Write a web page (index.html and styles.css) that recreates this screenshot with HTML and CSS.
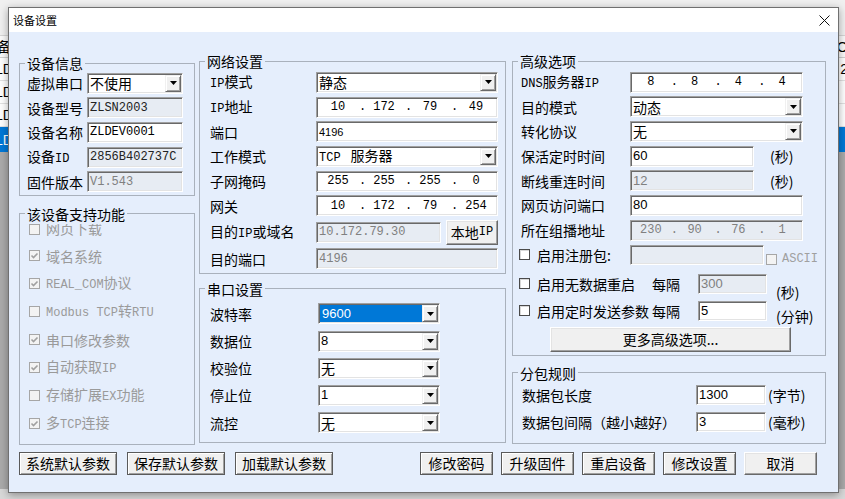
FILE: index.html
```html
<!DOCTYPE html>
<html lang="zh-CN">
<head>
<meta charset="utf-8">
<title>设备设置</title>
<link rel="stylesheet" href="styles.css">
</head>
<body>
<div class="app">
  <div class="app-top"></div>
  <div class="app-row head"><span class="cl">备</span><span class="cr">O</span></div>
  <div class="app-row"><span class="cl">LD</span><span class="cr">2</span></div>
  <div class="app-row"><span class="cl">LD</span><span class="cr"></span></div>
  <div class="app-row"><span class="cl">LD</span><span class="cr"></span></div>
  <div class="app-row cur"><span class="cl">LD</span><span class="cr"></span></div>
  <div class="app-rest"></div>
  <div class="app-bottom"></div>
</div>

<div class="dialog">
  <div class="titlebar">
    <span class="title">设备设置</span>
    <svg class="close" width="11" height="11" viewBox="0 0 11 11"><path d="M0.5 0.5 10.5 10.5 M10.5 0.5 0.5 10.5"/></svg>
  </div>
  <div class="dbody">
    <div class="panels">
      <div class="col col-left">
        <fieldset class="grp g-info">
          <legend>设备信息</legend>
          <div class="form f-info">
            <span class="lbl">虚拟串口</span>
            <div class="fld sel"><span class="v cjk">不使用</span><span class="dd"><svg width="7" height="4" viewBox="0 0 7 4"><path d="M0 0h7L3.5 4z"/></svg></span></div>
            <span class="lbl">设备型号</span>
            <div class="fld ro"><span class="v">ZLSN2003</span></div>
            <span class="lbl">设备名称</span>
            <div class="fld"><span class="v">ZLDEV0001</span></div>
            <span class="lbl">设备<span class="m">ID</span></span>
            <div class="fld ro"><span class="v">2856B402737C</span></div>
            <span class="lbl">固件版本</span>
            <div class="fld dis"><span class="v">V1.543</span></div>
          </div>
        </fieldset>
        <fieldset class="grp g-feat">
          <legend>该设备支持功能</legend>
          <div class="feat">
            <div class="chk first"><span class="cb dis"></span><span>网页下载</span></div>
            <div class="chk"><span class="cb dis"><svg viewBox="0 0 9 9"><path d="M1.5 4.5 3.5 6.5 7.5 2.5"/></svg></span><span>域名系统</span></div>
            <div class="chk"><span class="cb dis"><svg viewBox="0 0 9 9"><path d="M1.5 4.5 3.5 6.5 7.5 2.5"/></svg></span><span><span class="m">REAL_COM</span>协议</span></div>
            <div class="chk"><span class="cb dis"></span><span><span class="m">Modbus TCP</span>转<span class="m">RTU</span></span></div>
            <div class="chk"><span class="cb dis"><svg viewBox="0 0 9 9"><path d="M1.5 4.5 3.5 6.5 7.5 2.5"/></svg></span><span>串口修改参数</span></div>
            <div class="chk"><span class="cb dis"><svg viewBox="0 0 9 9"><path d="M1.5 4.5 3.5 6.5 7.5 2.5"/></svg></span><span>自动获取<span class="m">IP</span></span></div>
            <div class="chk"><span class="cb dis"></span><span>存储扩展<span class="m">EX</span>功能</span></div>
            <div class="chk"><span class="cb dis"><svg viewBox="0 0 9 9"><path d="M1.5 4.5 3.5 6.5 7.5 2.5"/></svg></span><span>多<span class="m">TCP</span>连接</span></div>
          </div>
        </fieldset>
      </div>

      <div class="col col-mid">
        <fieldset class="grp g-net">
          <legend>网络设置</legend>
          <div class="form f-net">
            <span class="lbl"><span class="m">IP</span>模式</span>
            <div class="fld sel"><span class="v cjk">静态</span><span class="dd"><svg width="7" height="4" viewBox="0 0 7 4"><path d="M0 0h7L3.5 4z"/></svg></span></div>
            <span class="lbl"><span class="m">IP</span>地址</span>
            <div class="fld ip"><span>10</span><span>.</span><span>172</span><span>.</span><span>79</span><span>.</span><span>49</span></div>
            <span class="lbl">端口</span>
            <div class="fld"><span class="v s small">4196</span></div>
            <span class="lbl">工作模式</span>
            <div class="fld sel"><span class="v cjk"><span class="m tcp">TCP</span>服务器</span><span class="dd"><svg width="7" height="4" viewBox="0 0 7 4"><path d="M0 0h7L3.5 4z"/></svg></span></div>
            <span class="lbl">子网掩码</span>
            <div class="fld ip"><span>255</span><span>.</span><span>255</span><span>.</span><span>255</span><span>.</span><span>0</span></div>
            <span class="lbl">网关</span>
            <div class="fld ip"><span>10</span><span>.</span><span>172</span><span>.</span><span>79</span><span>.</span><span>254</span></div>
            <span class="lbl">目的<span class="m">IP</span>或域名</span>
            <div class="pair">
              <div class="fld dis w-dest"><span class="v">10.172.79.30</span></div>
              <button class="btn b-local">本地<span class="m">IP</span></button>
            </div>
            <span class="lbl">目的端口</span>
            <div class="fld dis"><span class="v">4196</span></div>
          </div>
        </fieldset>
        <fieldset class="grp g-ser">
          <legend>串口设置</legend>
          <div class="form f-ser">
            <span class="lbl">波特率</span>
            <div class="fld sel hl"><span class="v s">9600</span><span class="dd"><svg width="7" height="4" viewBox="0 0 7 4"><path d="M0 0h7L3.5 4z"/></svg></span></div>
            <span class="lbl">数据位</span>
            <div class="fld sel"><span class="v s">8</span><span class="dd"><svg width="7" height="4" viewBox="0 0 7 4"><path d="M0 0h7L3.5 4z"/></svg></span></div>
            <span class="lbl">校验位</span>
            <div class="fld sel"><span class="v cjk">无</span><span class="dd"><svg width="7" height="4" viewBox="0 0 7 4"><path d="M0 0h7L3.5 4z"/></svg></span></div>
            <span class="lbl">停止位</span>
            <div class="fld sel"><span class="v s">1</span><span class="dd"><svg width="7" height="4" viewBox="0 0 7 4"><path d="M0 0h7L3.5 4z"/></svg></span></div>
            <span class="lbl">流控</span>
            <div class="fld sel"><span class="v cjk">无</span><span class="dd"><svg width="7" height="4" viewBox="0 0 7 4"><path d="M0 0h7L3.5 4z"/></svg></span></div>
          </div>
        </fieldset>
      </div>

      <div class="col col-right">
        <fieldset class="grp g-adv">
          <legend>高级选项</legend>
          <div class="form f-adv">
            <span class="lbl"><span class="m">DNS</span>服务器<span class="m">IP</span></span>
            <div class="fld ip"><span>8</span><span>.</span><span>8</span><span>.</span><span>4</span><span>.</span><span>4</span></div>
            <span class="lbl">目的模式</span>
            <div class="fld sel"><span class="v cjk">动态</span><span class="dd"><svg width="7" height="4" viewBox="0 0 7 4"><path d="M0 0h7L3.5 4z"/></svg></span></div>
            <span class="lbl">转化协议</span>
            <div class="fld sel"><span class="v cjk">无</span><span class="dd"><svg width="7" height="4" viewBox="0 0 7 4"><path d="M0 0h7L3.5 4z"/></svg></span></div>
            <span class="lbl">保活定时时间</span>
            <div class="pair2"><div class="fld w-short"><span class="v s">60</span></div><span class="unit">(秒)</span></div>
            <span class="lbl">断线重连时间</span>
            <div class="pair2"><div class="fld dis w-short"><span class="v s">12</span></div><span class="unit">(秒)</span></div>
            <span class="lbl">网页访问端口</span>
            <div class="fld"><span class="v s">80</span></div>
            <span class="lbl">所在组播地址</span>
            <div class="fld ip dis"><span>230</span><span>.</span><span>90</span><span>.</span><span>76</span><span>.</span><span>1</span></div>
          </div>
          <div class="opt o-reg">
            <span class="cb"></span>
            <span class="olbl w-reg">启用注册包:</span>
            <div class="fld dis w-reg-f"></div>
            <span class="ascii"><span class="cb dis"></span><span class="m">ASCII</span></span>
          </div>
          <div class="opt o-nodata">
            <span class="cb"></span>
            <span class="olbl">启用无数据重启</span>
            <span class="every">每隔</span>
            <div class="fld dis w-num"><span class="v s">300</span></div>
            <span class="unit u-low1">(秒)</span>
          </div>
          <div class="opt o-timer">
            <span class="cb"></span>
            <span class="olbl">启用定时发送参数</span>
            <span class="every">每隔</span>
            <div class="fld w-num"><span class="v s">5</span></div>
            <span class="unit u-low2">(分钟)</span>
          </div>
          <button class="btn b-more">更多高级选项...</button>
        </fieldset>
        <fieldset class="grp g-pkt">
          <legend>分包规则</legend>
          <div class="pk">
            <span class="plbl">数据包长度</span>
            <div class="fld w-pk"><span class="v s">1300</span></div>
            <span class="unit">(字节)</span>
          </div>
          <div class="pk pk2">
            <span class="plbl">数据包间隔（越小越好）</span>
            <div class="fld w-pk"><span class="v s">3</span></div>
            <span class="unit">(毫秒)</span>
          </div>
        </fieldset>
      </div>
    </div>

    <div class="actions">
      <div class="bgroup g-l">
        <button class="btn dark b-wide">系统默认参数</button>
        <button class="btn dark b-wide">保存默认参数</button>
        <button class="btn dark b-wide">加载默认参数</button>
      </div>
      <div class="bgroup g-r">
        <button class="btn dark b-n">修改密码</button>
        <button class="btn dark b-n">升级固件</button>
        <button class="btn dark b-n">重启设备</button>
        <button class="btn dark b-n">修改设置</button>
        <button class="btn b-n">取消</button>
      </div>
    </div>
  </div>
</div>
</body>
</html>
```

FILE: styles.css
```css
* { box-sizing: border-box; }
html, body { margin: 0; padding: 0; }
body {
  width: 845px;
  height: 499px;
  overflow: hidden;
  position: relative;
  background: #f0f0f0;
  color: #000;
  font-family: "Noto Sans CJK SC", sans-serif;
  font-size: 14px;
  line-height: 16px;
}

/* background application */
.app { height: 499px; display: flex; flex-direction: column; }
.app-top { height: 36px; background: #f0f0f0; border-bottom: 1px solid #d6d6d6; }
.app-row {
  height: 23px;
  display: flex;
  justify-content: space-between;
  align-items: center;
  background: #fff;
  border-bottom: 1px solid #e2e2e2;
  font-family: "Liberation Sans", "Noto Sans CJK SC", sans-serif;
  font-size: 14px;
}
.app-row.head { height: 22px; background: #fafafa; border-bottom: 1px solid #d0d0d0; }
.app-row.cur { height: 25px; background: #0078d7; color: #fff; border-bottom: 0; }
.cl { margin-left: -5px; }
.head .cl { margin-left: -3px; }
.cr { margin-right: -3px; }
.app-rest { flex: 1; background: #ababab; }
.app-bottom { height: 10px; background: #d8d8d8; }

/* dialog window */
.dialog {
  position: absolute;
  left: 8px;
  top: 7px;
  width: 831px;
  height: 486px;
  border: 1px solid #707070;
  box-shadow: 0 2px 8px rgba(0,0,0,0.35);
  display: flex;
  flex-direction: column;
  background: #e5eefc;
}
.titlebar {
  height: 24px;
  flex-shrink: 0;
  background: #fff;
  display: flex;
  align-items: center;
  padding-left: 4px;
  font-size: 11px;
}
.close { margin-left: auto; margin-right: 8px; }
.close path { stroke: #111; stroke-width: 1; fill: none; }

.dbody {
  flex: 1;
  background: #e5eefc;
  padding: 21px 12px 0 10px;
  display: flex;
  flex-direction: column;
}
.panels { display: flex; align-items: flex-start; }
.col { display: flex; flex-direction: column; flex-shrink: 0; }
.col-left { width: 176px; margin-top: 2px; }
.col-mid { width: 307px; margin-left: 4px; }
.col-right { width: 314px; margin-left: 6px; }

.grp {
  margin: 0;
  padding: 0;
  border: 1px solid #a9b1bc;
  min-width: 0;
}
.grp legend {
  margin-left: 5px;
  padding: 0 2px;
  font-size: 14px;
  line-height: 16px;
}

.form { display: grid; align-items: center; }
.lbl { white-space: nowrap; }
.m { font-family: "Liberation Mono", monospace; font-size: 12px; }

/* fields */
.fld {
  height: 21px;
  display: flex;
  align-items: center;
  background: #fff;
  border: 1px solid;
  border-color: #a0a0a0 #fff #fff #a0a0a0;
  box-shadow: inset 1px 1px 0 #696969, inset -1px -1px 0 #e3e3e3;
  padding-left: 2px;
  font-family: "Liberation Mono", "Noto Sans CJK SC", monospace;
  font-size: 12px;
  line-height: 16px;
  white-space: nowrap;
  overflow: hidden;
}
.fld.ro { background: #e7ecf3; color: #222; }
.fld.dis { background: #e7ecf3; color: #808080; }
.cjk { font-family: "Noto Sans CJK SC", sans-serif; font-size: 14px; }
.s { font-family: "Liberation Sans", sans-serif; font-size: 13px; }
.s.small { font-size: 11px; }
.tcp { margin-right: 10px; }
.sel { padding-right: 0; }
.sel .v { flex: 1; }
.dd {
  width: 16px;
  align-self: stretch;
  margin: 1px 1px 1px 0;
  background: #f0f0f0;
  border: 1px solid;
  border-color: #f0f0f0 #696969 #696969 #f0f0f0;
  box-shadow: inset 1px 1px 0 #fff, inset -1px -1px 0 #a0a0a0;
  display: flex;
  align-items: center;
  justify-content: center;
  flex-shrink: 0;
}
.dd path { fill: #000; }
.sel.hl { padding-left: 0; }
.sel.hl .v {
  align-self: stretch;
  margin: 1px 0 1px 1px;
  background: #0078d7;
  color: #fff;
  display: flex;
  align-items: center;
  padding-left: 2px;
}
.ip {
  display: grid;
  grid-template-columns: 1fr 4px 1fr 4px 1fr 4px 1fr;
  padding: 0;
  text-align: center;
}

/* buttons */
.btn {
  font-family: "Noto Sans CJK SC", sans-serif;
  font-size: 14px;
  line-height: 16px;
  color: #000;
  background: #f0f0f0;
  border: 1px solid;
  border-color: #fff #696969 #696969 #fff;
  box-shadow: inset -1px -1px 0 #a0a0a0, inset 1px 1px 0 #e3e3e3;
  padding: 0;
  margin: 0;
  display: flex;
  align-items: center;
  justify-content: center;
}
.btn.dark {
  border-color: #5a5a5a;
  box-shadow: inset 1px 1px 0 #fff, inset -1px -1px 0 #a0a0a0;
}

/* left column */
.f-info {
  grid-template-columns: 60px 96px;
  grid-auto-rows: 24.6px;
  padding: 0 0 1px 7px;
}
.g-feat { margin-top: 10px; }
.feat { margin-top: 2px; padding-bottom: 6px; }
.chk {
  height: 28px;
  display: flex;
  align-items: center;
  padding-left: 9px;
  color: #9a9a9a;
  white-space: nowrap;
}
.chk.first {
  height: 12px;
  align-items: flex-end;
  overflow: hidden;
  margin-bottom: 6px;
}
.chk.first .cb { margin-bottom: 1px; }
.chk .cb { margin-right: 6px; }
.cb {
  width: 11px;
  height: 11px;
  flex-shrink: 0;
  border: 1px solid #4a4a4a;
  background: #fff;
  display: inline-flex;
  box-shadow: inset 1px 1px 0 #d8d8d8;
}
.cb svg { width: 9px; height: 9px; }
.cb path { fill: none; stroke: currentColor; stroke-width: 1.6; }
.cb.dis { border-color: #a6a6a6; background: #f3f3f3; color: #a0a0a0; box-shadow: none; }

/* middle column */
.f-net {
  grid-template-columns: 106px 182px;
  grid-template-rows: repeat(6, 24.7px) 28.5px 24.7px;
  padding: 1px 0 2px 10px;
}
.pair { display: flex; align-items: center; justify-content: space-between; }
.w-dest { width: 125px; }
.b-local { width: 52px; height: 25px; }
.g-ser { margin-top: 6.6px; }
.f-ser {
  grid-template-columns: 108px 122px;
  grid-auto-rows: 27.2px;
  padding: 3.4px 0 6px 10px;
}

/* right column */
.f-adv {
  grid-template-columns: 109px 173px;
  grid-auto-rows: 24.7px;
  padding: 0.7px 0 0 8px;
}
.pair2 { display: flex; align-items: center; }
.w-short { width: 124px; }
.unit { white-space: nowrap; font-size: 14px; line-height: 16px; }
.pair2 .unit { margin-left: 16px; }
.opt {
  display: flex;
  align-items: center;
  padding-left: 6px;
  white-space: nowrap;
}
.opt .olbl { margin-left: 7px; width: 115px; flex-shrink: 0; }
.o-reg { height: 24.7px; }
.o-reg .olbl { width: 93px; }
.w-reg-f { width: 134px; height: 20px; }
.ascii {
  align-self: flex-end;
  height: 14px;
  margin: 0 0 1px 2px;
  display: flex;
  align-items: center;
  color: #a0a0a0;
}
.ascii .m { margin-left: 5px; }
.o-nodata { height: 24px; margin-top: 4.7px; }
.o-timer { height: 24px; margin-top: 3px; }
.every { width: 28px; margin-right: 18px; flex-shrink: 0; }
.w-num { width: 69px; height: 20px; }
.opt .unit { margin-left: 9px; align-self: flex-end; }
.u-low1 { margin-bottom: -4px; }
.u-low2 { margin-bottom: -1px; }
.b-more { width: 241px; height: 25px; margin: 4px 0 3px 37px; }

.g-pkt { margin-top: 9px; }
.pk {
  height: 24px;
  display: flex;
  align-items: center;
  padding-left: 9px;
  white-space: nowrap;
  margin-top: 2px;
}
.pk2 { margin-top: 3.5px; margin-bottom: 8.5px; }
.plbl { width: 174px; flex-shrink: 0; }
.w-pk { width: 70px; height: 20px; }
.pk .unit { margin-left: 2px; }

/* bottom buttons */
.actions {
  display: flex;
  justify-content: space-between;
  margin-top: 7px;
  padding-right: 9px;
}
.bgroup { display: flex; }
.g-l { gap: 10px; }
.g-r { gap: 8px; }
.b-wide { width: 98px; height: 23px; }
.b-n { width: 73px; height: 23px; }
```
